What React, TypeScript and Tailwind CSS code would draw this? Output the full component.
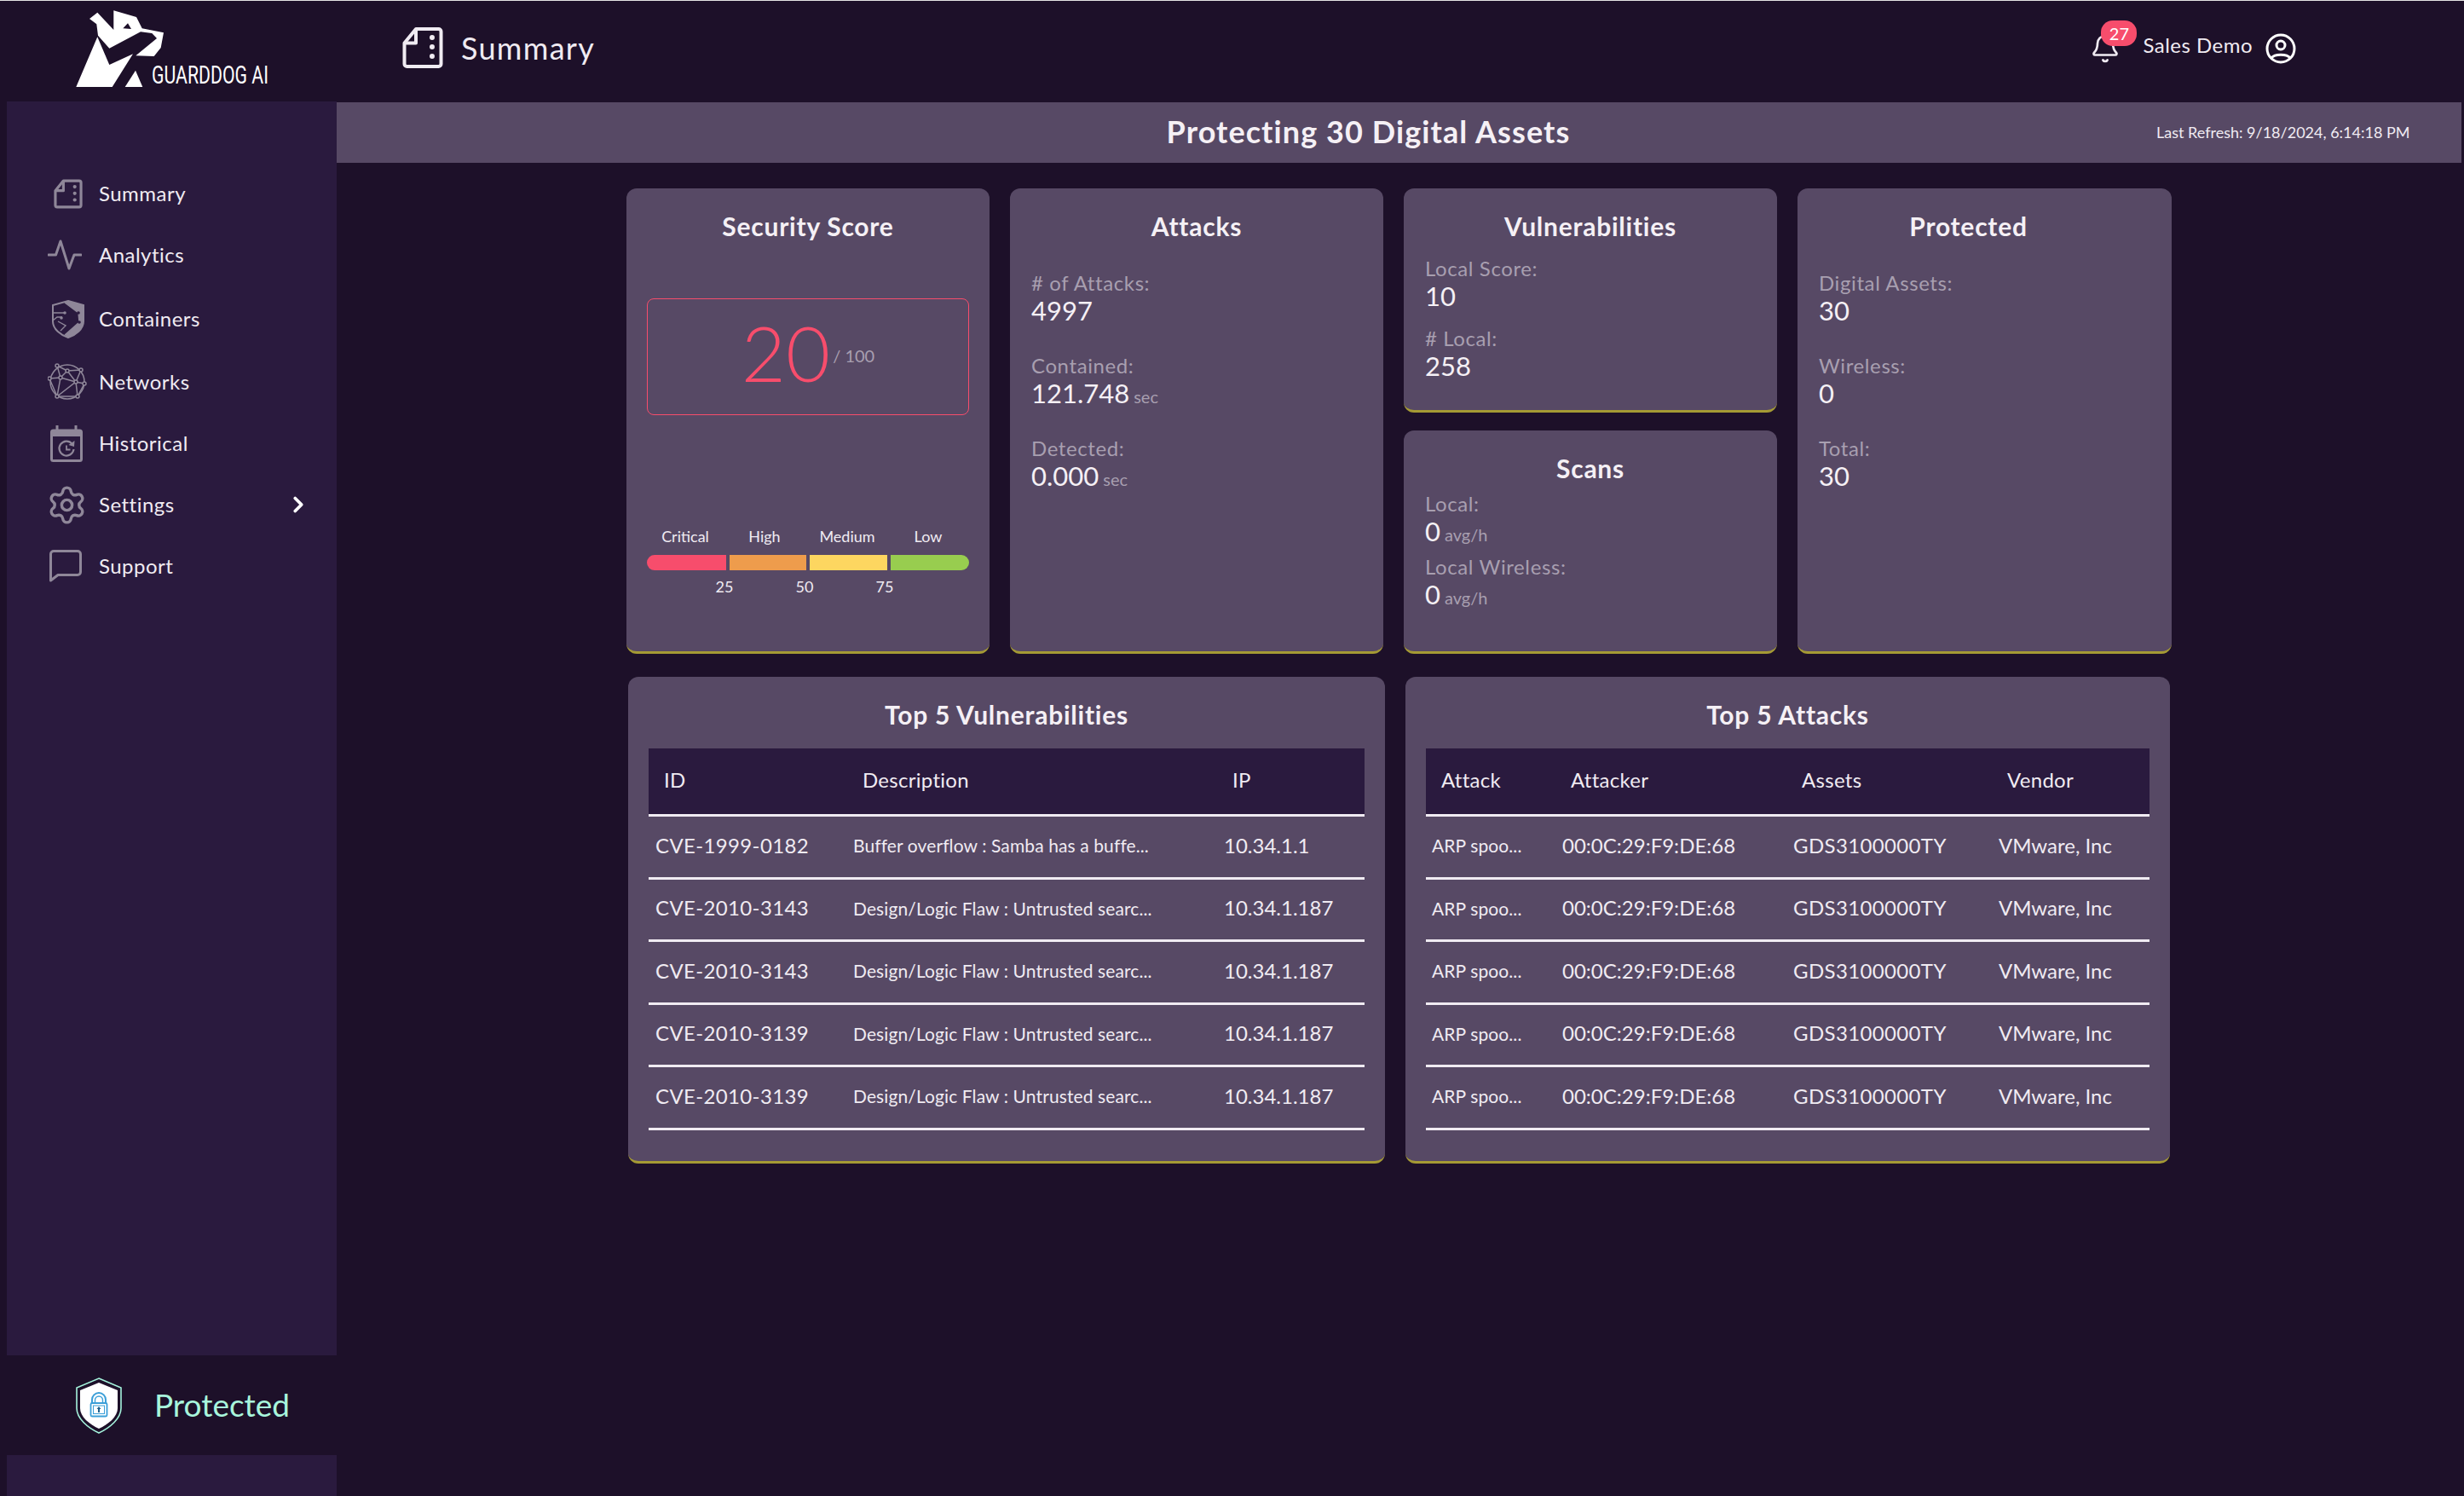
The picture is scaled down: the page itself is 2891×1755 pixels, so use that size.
import { Bell, ChevronRight, Settings } from "lucide-react";
import type { ReactNode } from "react";

function SummaryIcon({ className, weight = 4 }: { className: string; weight?: number }) {
  return (
    <svg viewBox="0 0 48 50" fill="none" stroke="currentColor" strokeWidth={weight} strokeLinejoin="round" className={className}>
      <path d="M16 3H42.500a3 3 0 0 1 3 3V44a3 3 0 0 1-3 3H5.500a3 3 0 0 1-3-3V19.500Z" />
      <path d="M16 3V19.500H2.500" fill="none" />
      <circle cx="35" cy="13" r="3" fill="currentColor" stroke="none" />
      <circle cx="35" cy="24" r="3" fill="currentColor" stroke="none" />
      <circle cx="35" cy="35" r="3" fill="currentColor" stroke="none" />
    </svg>
  );
}

function AnalyticsIcon() {
  return (
    <svg viewBox="0 0 40 36" fill="none" stroke="currentColor" strokeWidth="3" strokeLinejoin="round" strokeLinecap="round" className="w-[40px] h-[36px]">
      <path d="M1 18H9.500L15 2 25 34 31 18H39" />
    </svg>
  );
}

function ContainersIcon() {
  return (
    <svg viewBox="0 0 38 45" fill="none" stroke="currentColor" strokeWidth="2" className="w-[38px] h-[45px] ml-[5px]">
      <path d="M19 1 37 6V25C37 34 28 41 19 44 10 41 1 34 1 25V6Z" />
      <path d="M15 3 31 15 32 26 15 41 19 44C28 41 37 34 37 25V6L19 1Z" fill="currentColor" stroke="none" />
      <path d="M15 3 31 15 32 26 15 41" strokeWidth="1.400" />
      <path d="M1 15H15M1 24 6 20H12M7 25 16 30 10 36" strokeWidth="1.400" />
      <circle cx="15" cy="15" r="1.800" fill="currentColor" stroke="none" />
      <circle cx="11" cy="21" r="1.800" fill="currentColor" stroke="none" />
      <circle cx="31" cy="15" r="1.800" fill="#2a1a3e" stroke="none" />
      <circle cx="32" cy="26" r="1.800" fill="#2a1a3e" stroke="none" />
    </svg>
  );
}

function NetworksIcon() {
  return (
    <svg viewBox="0 0 46 44" fill="none" stroke="currentColor" strokeWidth="1.500" className="w-[46px] h-[44px]">
      <circle cx="23" cy="22" r="20" />
      <path d="M11 3 23 9 39 8M2 18 15 17 33 22 39 8M11 3 15 17 11 39 33 22 35 39 11 39M23 9 15 17M23 9 33 22 43 24 35 39M2 18 11 39" />
      {[[11, 3], [23, 9], [39, 8], [2, 18], [15, 17], [33, 22], [11, 39], [35, 39], [43, 24]].map(([cx, cy]) => (
        <circle key={`${cx}-${cy}`} cx={cx} cy={cy} r="2" fill="#2a1a3e" />
      ))}
    </svg>
  );
}

function HistoricalIcon() {
  return (
    <svg viewBox="0 0 38 43" fill="none" stroke="currentColor" strokeWidth="3" className="w-[38px] h-[43px] ml-[3px]">
      <rect x="1.500" y="6" width="35" height="35.500" rx="2" />
      <path d="M1 6H37V13H1Z" fill="currentColor" stroke="none" />
      <path d="M8 0V6M30 0V6" />
      <path d="M25.500 21.500A8.500 8.500 0 1 0 27.500 28" strokeWidth="2.200" />
      <path d="M28.500 18 28 25 21.500 23Z" fill="currentColor" stroke="none" />
      <path d="M19 23.500V28.500H23.500" strokeWidth="1.800" />
    </svg>
  );
}

function SupportIcon() {
  return (
    <svg viewBox="0 0 38 38" fill="none" stroke="currentColor" strokeWidth="3" strokeLinejoin="round" className="w-[38px] h-[38px] ml-[2px]">
      <path d="M5 1.500H33A3.500 3.500 0 0 1 36.500 5V26A3.500 3.500 0 0 1 33 29.500H10L1.500 36V5A3.500 3.500 0 0 1 5 1.500Z" />
    </svg>
  );
}

function GuardShield() {
  return (
    <svg viewBox="0 0 54 66" className="w-[54px] h-[66px]">
      <path d="M27 1 53 12V36C53 48 40 59 27 65 14 59 1 48 1 36V12Z" fill="#1d1029" stroke="#a5f3dc" strokeWidth="1.600" />
      <path d="M27 6 49 15V36C49 46 38 55 27 60 16 55 5 46 5 36V15Z" fill="#ffffff" />
      <path d="M19 30V26A8 8 0 0 1 35 26V30" fill="none" stroke="#3b9fd8" strokeWidth="2" />
      <path d="M22.500 30V26.500A4.500 4.500 0 0 1 31.500 26.500V30" fill="none" stroke="#3b9fd8" strokeWidth="1.400" />
      <rect x="17.500" y="30" width="19" height="15.500" rx="1.500" fill="none" stroke="#3b9fd8" strokeWidth="1.800" />
      <rect x="20.500" y="33" width="13" height="9.500" fill="none" stroke="#3b9fd8" strokeWidth="1" />
      <path d="M27 34 29.500 37H28V41H26V37H24.500Z" fill="#1f5f8a" />
    </svg>
  );
}

function Logo() {
  return (
    <svg viewBox="0 0 280 119" className="w-[280px] h-[119px] shrink-0 overflow-visible">
      <path
        fillRule="evenodd"
        fill="#ffffff"
        d="M45 22 54.300 14.700 73.300 35V12.300L100 20 106.700 33.300 132 38.300 128.700 56 120.700 66 99.300 65.300 124 45 118.300 39 105 37.300 68.300 56.700 55 41.700 53.300 28.300ZM84.300 33.300 90 27.300 94 34Z"
      />
      <path fill="#ffffff" d="M29.300 102 54.300 43.300 68.300 76 96 63.300 71.700 102Z" />
      <path fill="#ffffff" d="M86.700 102 99 82.700 107.300 102Z" />
      <text
        x="118"
        y="97.500"
        fill="#ffffff"
        fontFamily="Roboto, sans-serif"
        fontSize="29"
        textLength="137"
        lengthAdjust="spacingAndGlyphs"
      >
        GUARDDOG AI
      </text>
    </svg>
  );
}

const nav: { label: string; icon: ReactNode; rowClass: string }[] = [
  { label: "Summary", icon: <SummaryIcon className="w-[34px] h-[35px] ml-[7px]" weight={4.500} />, rowClass: "" },
  { label: "Analytics", icon: <AnalyticsIcon />, rowClass: "" },
  { label: "Containers", icon: <ContainersIcon />, rowClass: "mt-[3px]" },
  { label: "Networks", icon: <NetworksIcon />, rowClass: "mt-[2px]" },
  { label: "Historical", icon: <HistoricalIcon />, rowClass: "" },
  { label: "Settings", icon: <Settings size={49} strokeWidth={1.700} className="-ml-[2px]" />, rowClass: "" },
  { label: "Support", icon: <SupportIcon />, rowClass: "" },
];

function Sidebar() {
  return (
    <aside className="w-[387px] ml-[8px] shrink-0 flex flex-col">
      <div className="h-[1471px] bg-[#2a1a3e] pt-[72px]">
        {nav.map((item) => (
          <div key={item.label} className={`h-[72px] flex items-center pl-[48px] ${item.rowClass}`}>
            <div className="w-[48px] mr-[12px] flex items-center shrink-0 text-[#8f8799]">{item.icon}</div>
            <span className="text-[24px] tracking-[0.02em] text-[#f0ebf2] flex-1">{item.label}</span>
            {item.label === "Settings" && <ChevronRight size={30} strokeWidth={3} className="text-white mr-[30px]" />}
          </div>
        ))}
      </div>
      <div className="h-[117px] flex items-center pl-[81px]">
        <GuardShield />
        <span className="ml-[38px] pb-[2px] text-[37px] text-[#a8f5dc]">Protected</span>
      </div>
      <div className="flex-1 bg-[#2a1a3e]" />
    </aside>
  );
}

function Card({ className, children }: { className: string; children: ReactNode }) {
  return (
    <div className={`bg-[#574965] rounded-xl border-b-[3px] border-[#a59a34] ${className}`}>{children}</div>
  );
}

function CardTitle({ children, className = "" }: { children: ReactNode; className?: string }) {
  return (
    <h3 className={`h-[32px] leading-[29px] text-center text-[30px] font-bold tracking-[0.025em] text-[#f5f0f5] ${className}`}>
      {children}
    </h3>
  );
}

function Stat({ label, value, unit }: { label: string; value: string; unit?: string }) {
  return (
    <div>
      <div className="h-[32px] leading-[32px] text-[24px] tracking-[0.025em] text-[#a89fb0]">{label}</div>
      <div className="h-[33px] leading-[33px] text-[31px] text-[#f5f0f5]">
        {value}
        {unit && <span className="text-[20px] text-[#a89fb0] ml-[5px]">{unit}</span>}
      </div>
    </div>
  );
}

function SecurityScore() {
  return (
    <Card className="w-[426px] pt-[30px] px-[24px]">
      <CardTitle>Security Score</CardTitle>
      <div className="mt-[67px] h-[137px] border border-[#f74d6c] rounded-lg flex items-center justify-center pb-[12px]">
        <span className="text-[90px] font-light text-[#f74d6c] leading-none">20</span>
        <span className="text-[20px] text-[#a89fb0] ml-[3px] mt-[8px]">/ 100</span>
      </div>
      <div className="mt-[131px] flex text-[18px] leading-[22px] text-center text-[#f0ebf2]">
        <div className="w-[90px]">Critical</div>
        <div className="w-[96px]">High</div>
        <div className="w-[98px]">Medium</div>
        <div className="w-[92px]">Low</div>
      </div>
      <div className="mt-[11px] flex gap-[4px] h-[18px]">
        <div className="w-[93px] bg-[#f74d6c] rounded-l-full" />
        <div className="w-[90px] bg-[#ee9c4c]" />
        <div className="w-[91px] bg-[#fdd660]" />
        <div className="flex-1 bg-[#98cd4f] rounded-r-full" />
      </div>
      <div className="mt-[8px] ml-[71px] flex gap-[54px] text-[18px] leading-[22px] text-center text-[#f0ebf2]">
        <div className="w-[40px]">25</div>
        <div className="w-[40px]">50</div>
        <div className="w-[40px]">75</div>
      </div>
    </Card>
  );
}

function TopRow() {
  return (
    <div className="flex gap-[24px] h-[546px]">
      <SecurityScore />
      <Card className="w-[438px] pt-[30px] px-[25px]">
        <CardTitle>Attacks</CardTitle>
        <div className="mt-[33px] flex flex-col gap-[32px]">
          <Stat label="# of Attacks:" value="4997" />
          <Stat label="Contained:" value="121.748" unit="sec" />
          <Stat label="Detected:" value="0.000" unit="sec" />
        </div>
      </Card>
      <div className="w-[438px] flex flex-col gap-[21px]">
        <Card className="h-[263px] pt-[30px] px-[25px]">
          <CardTitle>Vulnerabilities</CardTitle>
          <div className="mt-[16px] flex flex-col gap-[17px]">
            <Stat label="Local Score:" value="10" />
            <Stat label="# Local:" value="258" />
          </div>
        </Card>
        <Card className="h-[262px] pt-[30px] px-[25px]">
          <CardTitle>Scans</CardTitle>
          <div className="mt-[8px] flex flex-col gap-[9px]">
            <Stat label="Local:" value="0" unit="avg/h" />
            <Stat label="Local Wireless:" value="0" unit="avg/h" />
          </div>
        </Card>
      </div>
      <Card className="w-[439px] pt-[30px] px-[25px]">
        <CardTitle className="pr-[38px]">Protected</CardTitle>
        <div className="mt-[33px] flex flex-col gap-[32px]">
          <Stat label="Digital Assets:" value="30" />
          <Stat label="Wireless:" value="0" />
          <Stat label="Total:" value="30" />
        </div>
      </Card>
    </div>
  );
}

const vulnRows = [
  ["CVE-1999-0182", "Buffer overflow : Samba has a buffe...", "10.34.1.1"],
  ["CVE-2010-3143", "Design/Logic Flaw : Untrusted searc...", "10.34.1.187"],
  ["CVE-2010-3143", "Design/Logic Flaw : Untrusted searc...", "10.34.1.187"],
  ["CVE-2010-3139", "Design/Logic Flaw : Untrusted searc...", "10.34.1.187"],
  ["CVE-2010-3139", "Design/Logic Flaw : Untrusted searc...", "10.34.1.187"],
];

const attackRows = Array.from({ length: 5 }, () => ["ARP spoo...", "00:0C:29:F9:DE:68", "GDS3100000TY", "VMware, Inc"]);

function DataTable({
  title,
  columns,
  grid,
  smallCol,
  wideCol,
  rows,
  className,
}: {
  title: string;
  columns: string[];
  grid: string;
  smallCol: number;
  wideCol: number;
  rows: string[][];
  className: string;
}) {
  return (
    <Card className={`h-[571px] pt-[30px] px-[24px] ${className}`}>
      <CardTitle>{title}</CardTitle>
      <div className={`mt-[22px] h-[80px] pb-[3px] bg-[#2a1a3e] border-b-[3px] border-[#f0ebf2] grid items-center ${grid}`}>
        {columns.map((col) => (
          <div key={col} className="pl-[18px] text-[24px] tracking-[0.012em] text-[#f0ebf2]">
            {col}
          </div>
        ))}
      </div>
      {rows.map((row, i) => (
        <div key={i} className={`h-[73.500px] pb-[3px] border-b-[3px] border-[#f0ebf2] grid items-center ${grid}`}>
          {row.map((cell, j) => (
            <div
              key={j}
              className={`whitespace-nowrap text-[#f0ebf2] ${
                j === smallCol
                  ? "pl-[7px] text-[21px] tracking-[0.005em]"
                  : j === wideCol
                    ? "pl-[8px] text-[24px] tracking-[0.015em]"
                    : "pl-[8px] text-[24px]"
              }`}
            >
              {cell}
            </div>
          ))}
        </div>
      ))}
    </Card>
  );
}

export default function App() {
  return (
    <div className="h-[1755px] bg-[#1d1029] border-t border-[#e4e4e4] font-[Lato,sans-serif] overflow-hidden">
      <header className="h-[118px] flex items-start">
        <div className="w-[472px] -mt-[1px] pl-[60px]">
          <Logo />
        </div>
        <div className="flex items-center h-[110px] text-[#f0ebf2]">
          <SummaryIcon className="w-[48px] h-[50px]" />
          <span className="ml-[21px] text-[36px] tracking-[0.036em]">Summary</span>
        </div>
        <div className="ml-auto mr-[197px] mt-[22px] flex items-start text-[#f0ebf2]">
          <div className="relative w-[62px] h-[54px] mt-[16px]">
            <Bell size={36} strokeWidth={1.800} />
            <span className="absolute left-[13px] -top-[15px] w-[42px] h-[30px] rounded-[14px] bg-[#f74d6c] text-white text-[20px] leading-[30px] text-center">
              27
            </span>
          </div>
          <span className="text-[24px] leading-[60px] tracking-[0.02em]">Sales Demo</span>
          <svg viewBox="0 0 36 36" fill="none" stroke="#ffffff" strokeWidth="3" className="w-[36px] h-[36px] ml-[15px] mt-[16px]">
            <circle cx="18" cy="18" r="16" />
            <circle cx="18" cy="14" r="5" />
            <path d="M7 29C11 24 25 24 29 29" />
          </svg>
        </div>
      </header>
      <div className="flex h-[1636px]">
        <Sidebar />
        <main className="w-[2493px] pt-[1px]">
          <div className="h-[71px] bg-[#574965] flex items-center text-[#f5f0f5]">
            <h1 className="flex-1 pl-[286px] pb-[3px] text-center text-[36px] font-bold tracking-[0.03em]">
              Protecting 30 Digital Assets
            </h1>
            <div className="w-[358px] text-[18px] text-[#f0ebf2]">Last Refresh: 9/18/2024, 6:14:18 PM</div>
          </div>
          <div className="w-[1813px] mx-auto pt-[30px]">
            <TopRow />
            <div className="mt-[27px] flex gap-[24px] justify-center">
              <DataTable
                className="w-[888px]"
                title="Top 5 Vulnerabilities"
                columns={["ID", "Description", "IP"]}
                grid="grid-cols-[233px_434px_1fr]"
                smallCol={1}
                wideCol={0}
                rows={vulnRows}
              />
              <DataTable
                className="w-[897px]"
                title="Top 5 Attacks"
                columns={["Attack", "Attacker", "Assets", "Vendor"]}
                grid="grid-cols-[152px_271px_241px_1fr]"
                smallCol={0}
                wideCol={2}
                rows={attackRows}
              />
            </div>
          </div>
        </main>
      </div>
    </div>
  );
}
